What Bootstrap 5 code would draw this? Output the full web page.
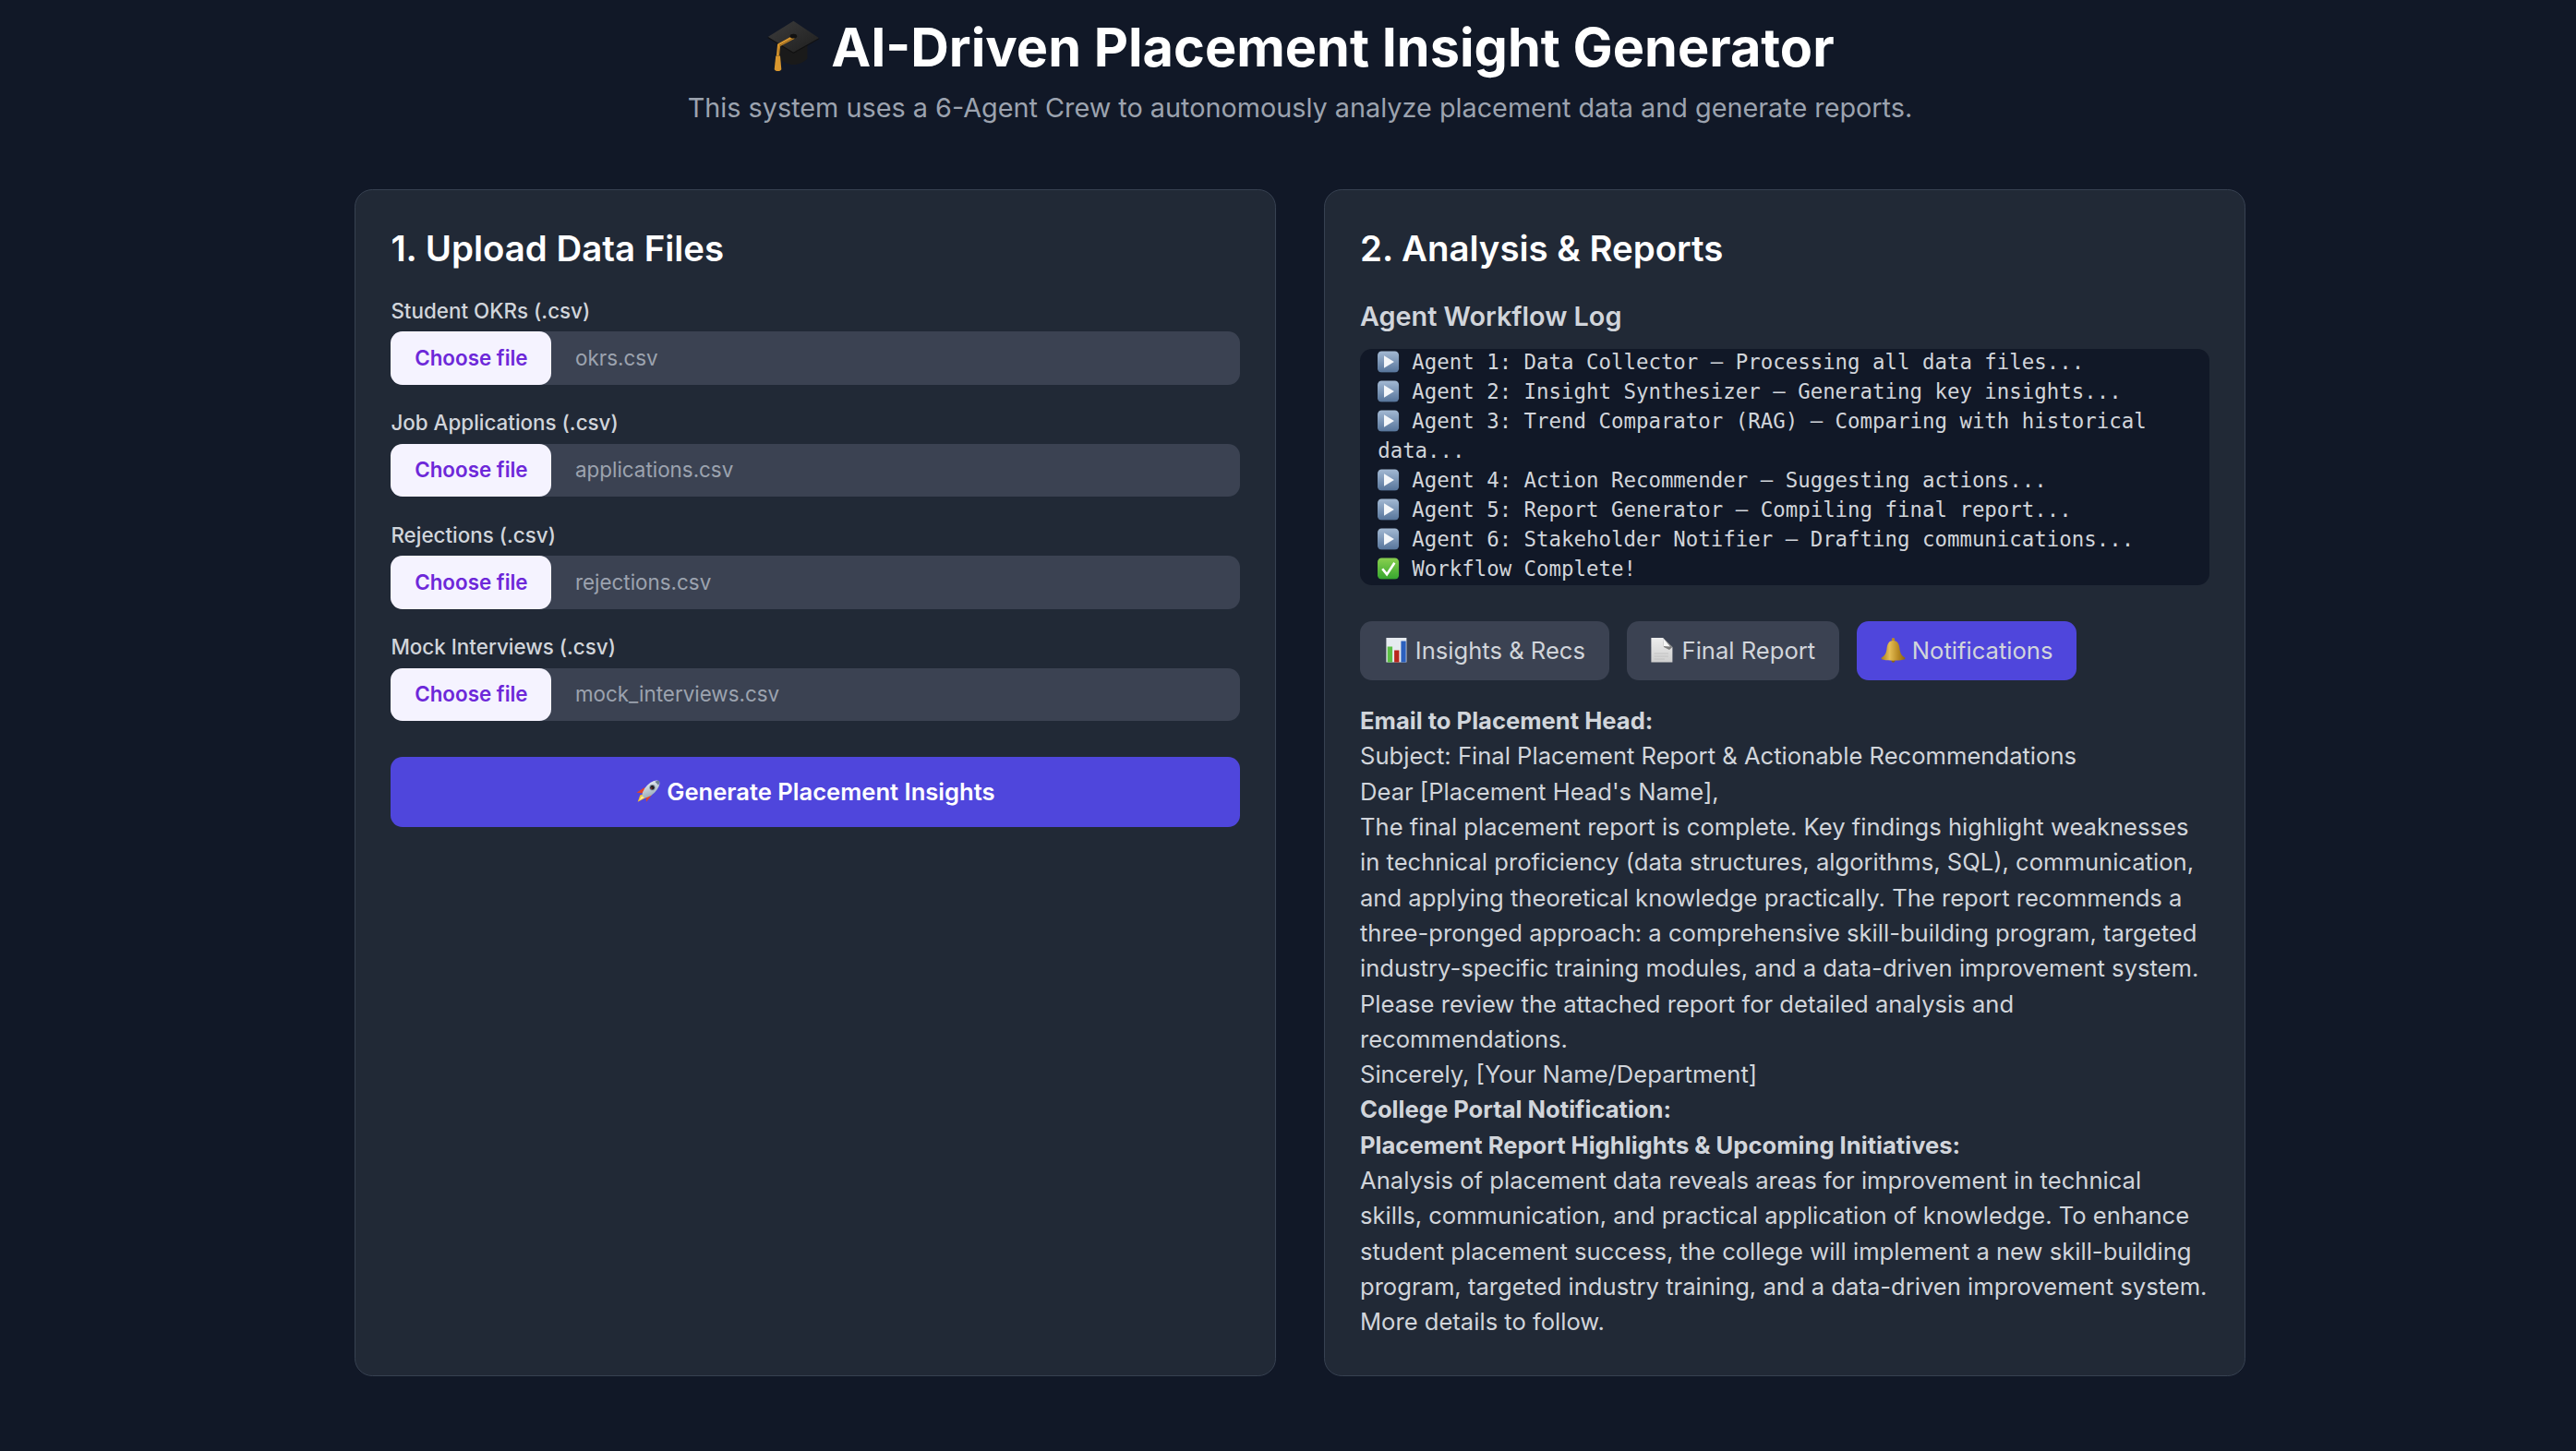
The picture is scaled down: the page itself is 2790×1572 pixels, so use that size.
<!DOCTYPE html>
<html lang="en">
<head>
  <meta charset="UTF-8">
  <title>AI-Driven Placement Insight Generator</title>
  <link href="https://cdn.jsdelivr.net/npm/bootstrap@5.3.0/dist/css/bootstrap.min.css" rel="stylesheet">
  <style>
    body {
      background-color: #111827;
      font-family: Inter, "Liberation Sans", sans-serif;
      color: #d1d5db;
      font-size: 25.6px;
      line-height: 38.3px;
    }
    .icon-sprite { display: block; width: 0; height: 0; }
    .emo { width: 1.055em; height: 1.055em; vertical-align: -0.16em; }
    .page-wrap { width: 2048px; margin-left: 384px; }
    .page-title { font-size: 57.6px; font-weight: 700; line-height: 64px; color: #fff; margin: 19px 0 0; }
    .page-title .emo { margin-right: -3.6px; }
    .page-sub { font-size: 28.8px; line-height: 44.8px; color: #9ca3af; margin: 11.6px 0 0; }
    .panels { --bs-gutter-x: 51.2px; margin-top: 65.6px; }
    .panel { background: #212936; border: 1px solid #374151; border-radius: 19.2px; color: inherit; }
    .panel .card-body { padding: 38.4px; }
    .panel-title { font-size: 38.4px; font-weight: 600; line-height: 50.6px; color: #fff; margin: 0; }
    .field-label { font-size: 22.4px; font-weight: 500; line-height: 32px; margin: 25.6px 0 6.4px; color: #d1d5db; display: block; }
    .file-row { height: 57.6px; background: #3b4252; border-radius: 12.8px; font-size: 22.4px; }
    .file-btn { width: 174px; background: #f5f3ff; color: #6d28d9; font-weight: 600; border-radius: 12.8px; }
    .file-name { color: #9ca3af; padding-left: 25.6px; }
    .go-btn { --bs-btn-bg: #4f46dc; --bs-btn-hover-bg: #4f46dc; --bs-btn-border-width: 0; --bs-btn-color: #fff; --bs-btn-hover-color: #fff; height: 76.8px; border-radius: 12.8px; font-size: 25.6px; font-weight: 600; margin-top: 38.4px; }
    .log-title { font-size: 28.8px; font-weight: 600; line-height: 44.8px; color: #d1d5db; margin: 25.6px 0 0; }
    .log-box { background: #111827; border-radius: 12.8px; margin: 12.8px 0 0; padding: 0 19.2px; height: 256px; font-family: "DejaVu Sans Mono", monospace; font-size: 22.4px; line-height: 32px; color: #d1d5db; white-space: pre-wrap; overflow: hidden; }
    .log-lines { display: block; margin-top: -2px; }
    .tab-row { gap: 19.2px; margin-top: 38.4px; }
    .tab-btn { --bs-btn-bg: #3b4252; --bs-btn-color: #d1d5db; --bs-btn-border-width: 0; --bs-btn-hover-bg: #3b4252; --bs-btn-hover-color: #d1d5db; height: 64px; padding: 0 25.6px; border-radius: 12.8px; font-size: 25.6px; line-height: 64px; }
    .tab-btn.is-on { --bs-btn-bg: #4f46dc; --bs-btn-hover-bg: #4f46dc; }
    .report-text { margin-top: 25.6px; }
    .report-text b { font-weight: 700; }
  </style>
</head>
<body>
  <svg class="icon-sprite" aria-hidden="true">
    <defs>
      <linearGradient id="gPlay" x1="0" y1="0" x2="0" y2="1"><stop offset="0" stop-color="#a3b9d3"/><stop offset="1" stop-color="#56749a"/></linearGradient>
      <linearGradient id="gCheck" x1="0" y1="0" x2="0" y2="1"><stop offset="0" stop-color="#8ad04f"/><stop offset="1" stop-color="#35a62e"/></linearGradient>
      <linearGradient id="gBell" x1="0" y1="0" x2="1" y2="0"><stop offset="0" stop-color="#a87d1e"/><stop offset=".35" stop-color="#e4bd55"/><stop offset=".7" stop-color="#b98b24"/><stop offset="1" stop-color="#8a6414"/></linearGradient>
      <linearGradient id="gPaper" x1="0" y1="0" x2="0" y2="1"><stop offset="0" stop-color="#ededed"/><stop offset="1" stop-color="#cfcfcf"/></linearGradient>
      <linearGradient id="gCap" x1="0" y1="0" x2="1" y2="1"><stop offset="0" stop-color="#3d3d3d"/><stop offset="1" stop-color="#1e1e1e"/></linearGradient>
      <linearGradient id="gRocket" x1="0" y1="0" x2="1" y2="1"><stop offset="0" stop-color="#eef2f5"/><stop offset="1" stop-color="#8fa3b5"/></linearGradient>
    </defs>
    <symbol id="i-play" viewBox="0 0 27 27">
      <rect x="0" y="0.5" width="26.4" height="26.4" rx="5" fill="url(#gPlay)"/>
      <path d="M8 6 20.5 13.7 8 21.4Z" fill="#f4f7fa"/>
    </symbol>
    <symbol id="i-check" viewBox="0 0 27 27">
      <rect x="0" y="0.5" width="26.4" height="26.4" rx="5" fill="url(#gCheck)"/>
      <path d="M6 14 11.5 21 21 6.5" fill="none" stroke="#fff" stroke-width="3"/>
    </symbol>
    <symbol id="i-chart" viewBox="0 0 27 27">
      <rect x="2.4" y="0" width="22" height="26.5" fill="#e6ebf0"/>
      <rect x="3.7" y="9.5" width="5.4" height="17" fill="#5cbf46"/>
      <rect x="11.1" y="13.5" width="5.3" height="13" fill="#b9281d"/>
      <rect x="18.4" y="3.5" width="5.3" height="23" fill="#2b60bd"/>
    </symbol>
    <symbol id="i-doc" viewBox="0 0 27 27">
      <path d="M1.4 0H14L24.4 10V26.5H1.4Z" fill="url(#gPaper)"/>
      <path d="M4.5 17H20M4.5 20H20M4.5 23H16" stroke="#bdbdbd" stroke-width=".8"/>
      <path d="M14 0 24.4 10 21 13 15 10Z" fill="#5e5e5e" opacity=".75"/>
      <path d="M14 0 15 9 22 9.6Z" fill="#f7f7f7"/>
    </symbol>
    <symbol id="i-bell" viewBox="0 0 27 27">
      <circle cx="13.5" cy="24.8" r="2" fill="#8a6414"/>
      <circle cx="13.5" cy="1.9" r="1.8" fill="#b98b24"/>
      <path d="M13.5 3C8.5 3 7 7 6.5 12 6 17 4 19.5.8 21.5 0 22.5 1 23.5 3 23.8 9 25 18 25 24 23.8 26 23.5 27 22.5 26.2 21.5 23 19.5 21 17 20.5 12 20 7 18.5 3 13.5 3Z" fill="url(#gBell)"/>
    </symbol>
    <symbol id="i-rocket" viewBox="0 0 27 27">
      <path d="M.3 14.7 9.3 9 11 15.7Z" fill="#e0432a"/>
      <path d="M11 24.7 17 17.3 10.3 15.7Z" fill="#e0432a"/>
      <path d="M1.7 24.7 4.3 17.5 8.3 16.2 10.8 20Z" fill="#f6c530"/>
      <path d="M3.5 23 5.5 19 8 18.3 9 20Z" fill="#fbe99a"/>
      <ellipse cx="16" cy="10.8" rx="5.6" ry="12" transform="rotate(45 16 10.8)" fill="url(#gRocket)"/>
      <path d="M25.3 1.7C25.4 3.5 25 5.2 24.2 6.8L20.3 2.8C21.9 2 23.5 1.6 25.3 1.7Z" fill="#6c8093"/>
      <circle cx="17.5" cy="9.2" r="3.1" fill="#7b8a96"/>
      <circle cx="17.5" cy="9.2" r="2.2" fill="#1d1d24"/>
      <circle cx="16.8" cy="10" r=".7" fill="#c0392b"/>
    </symbol>
    <symbol id="i-cap" viewBox="0 0 27 27">
      <path d="M6.8 13V19.3C8.5 21 11 22.2 13.5 22.2 16 22.2 18.5 21 20.2 19.3V13Z" fill="#1a1a1a"/>
      <path d="M1.2 8.9 13.5 1.2 25.8 9.4 13.5 16.3Z" fill="url(#gCap)"/>
      <path d="M1.2 8.9 13.5 16.3 25.8 9.4 25.8 9.9 13.5 16.9 1.2 9.4Z" fill="#111"/>
      <path d="M13.5 8.7 6.3 12.6 5.8 18" fill="none" stroke="#d9972e" stroke-width="1"/>
      <path d="M14 9.4 6.9 13.2 6.4 18" fill="none" stroke="#b97e22" stroke-width=".6"/>
      <ellipse cx="13.5" cy="8.5" rx="1.7" ry="1.1" fill="#111"/>
      <path d="M5 18H7.1L7.7 24.5C7 25.6 5 25.6 4.3 24.5Z" fill="#d9972e"/>
    </symbol>
  </svg>

  <div class="page-wrap">
    <header class="text-center">
      <h1 class="page-title"><svg class="emo"><use href="#i-cap"/></svg> AI-Driven Placement Insight Generator</h1>
      <p class="page-sub">This system uses a 6-Agent Crew to autonomously analyze placement data and generate reports.</p>
    </header>

    <div class="row panels">
      <div class="col-6">
        <div class="card panel h-100">
          <div class="card-body">
            <h2 class="panel-title">1. Upload Data Files</h2>

            <label class="field-label">Student OKRs (.csv)</label>
            <div class="file-row d-flex align-items-center">
              <span class="file-btn h-100 d-flex align-items-center justify-content-center">Choose file</span>
              <span class="file-name">okrs.csv</span>
            </div>

            <label class="field-label">Job Applications (.csv)</label>
            <div class="file-row d-flex align-items-center">
              <span class="file-btn h-100 d-flex align-items-center justify-content-center">Choose file</span>
              <span class="file-name">applications.csv</span>
            </div>

            <label class="field-label">Rejections (.csv)</label>
            <div class="file-row d-flex align-items-center">
              <span class="file-btn h-100 d-flex align-items-center justify-content-center">Choose file</span>
              <span class="file-name">rejections.csv</span>
            </div>

            <label class="field-label">Mock Interviews (.csv)</label>
            <div class="file-row d-flex align-items-center">
              <span class="file-btn h-100 d-flex align-items-center justify-content-center">Choose file</span>
              <span class="file-name">mock_interviews.csv</span>
            </div>

            <button class="btn go-btn w-100"><svg class="emo"><use href="#i-rocket"/></svg> Generate Placement Insights</button>
          </div>
        </div>
      </div>

      <div class="col-6">
        <div class="card panel h-100">
          <div class="card-body">
            <h2 class="panel-title">2. Analysis &amp; Reports</h2>
            <h3 class="log-title">Agent Workflow Log</h3>
            <pre class="log-box"><span class="log-lines"><svg class="emo"><use href="#i-play"/></svg> Agent 1: Data Collector – Processing all data files...
<svg class="emo"><use href="#i-play"/></svg> Agent 2: Insight Synthesizer – Generating key insights...
<svg class="emo"><use href="#i-play"/></svg> Agent 3: Trend Comparator (RAG) – Comparing with historical data...
<svg class="emo"><use href="#i-play"/></svg> Agent 4: Action Recommender – Suggesting actions...
<svg class="emo"><use href="#i-play"/></svg> Agent 5: Report Generator – Compiling final report...
<svg class="emo"><use href="#i-play"/></svg> Agent 6: Stakeholder Notifier – Drafting communications...
<svg class="emo"><use href="#i-check"/></svg> Workflow Complete!</span></pre>

            <div class="d-flex tab-row">
              <button class="btn tab-btn"><svg class="emo"><use href="#i-chart"/></svg> Insights &amp; Recs</button>
              <button class="btn tab-btn"><svg class="emo"><use href="#i-doc"/></svg> Final Report</button>
              <button class="btn tab-btn is-on"><svg class="emo"><use href="#i-bell"/></svg> Notifications</button>
            </div>

            <div class="report-text">
              <b>Email to Placement Head:</b><br>
              Subject: Final Placement Report &amp; Actionable Recommendations<br>
              Dear [Placement Head's Name],<br>
              The final placement report is complete. Key findings highlight weaknesses in technical proficiency (data structures, algorithms, SQL), communication, and applying theoretical knowledge practically. The report recommends a three-pronged approach: a comprehensive skill-building program, targeted industry-specific training modules, and a data-driven improvement system. Please review the attached report for detailed analysis and recommendations.<br>
              Sincerely, [Your Name/Department]<br>
              <b>College Portal Notification:</b><br>
              <b>Placement Report Highlights &amp; Upcoming Initiatives:</b><br>
              Analysis of placement data reveals areas for improvement in technical skills, communication, and practical application of knowledge. To enhance student placement success, the college will implement a new skill-building program, targeted industry training, and a data-driven improvement system. More details to follow.
            </div>
          </div>
        </div>
      </div>
    </div>
  </div>
  <script src="https://cdn.jsdelivr.net/npm/bootstrap@5.3.0/dist/js/bootstrap.bundle.min.js"></script>
</body>
</html>
